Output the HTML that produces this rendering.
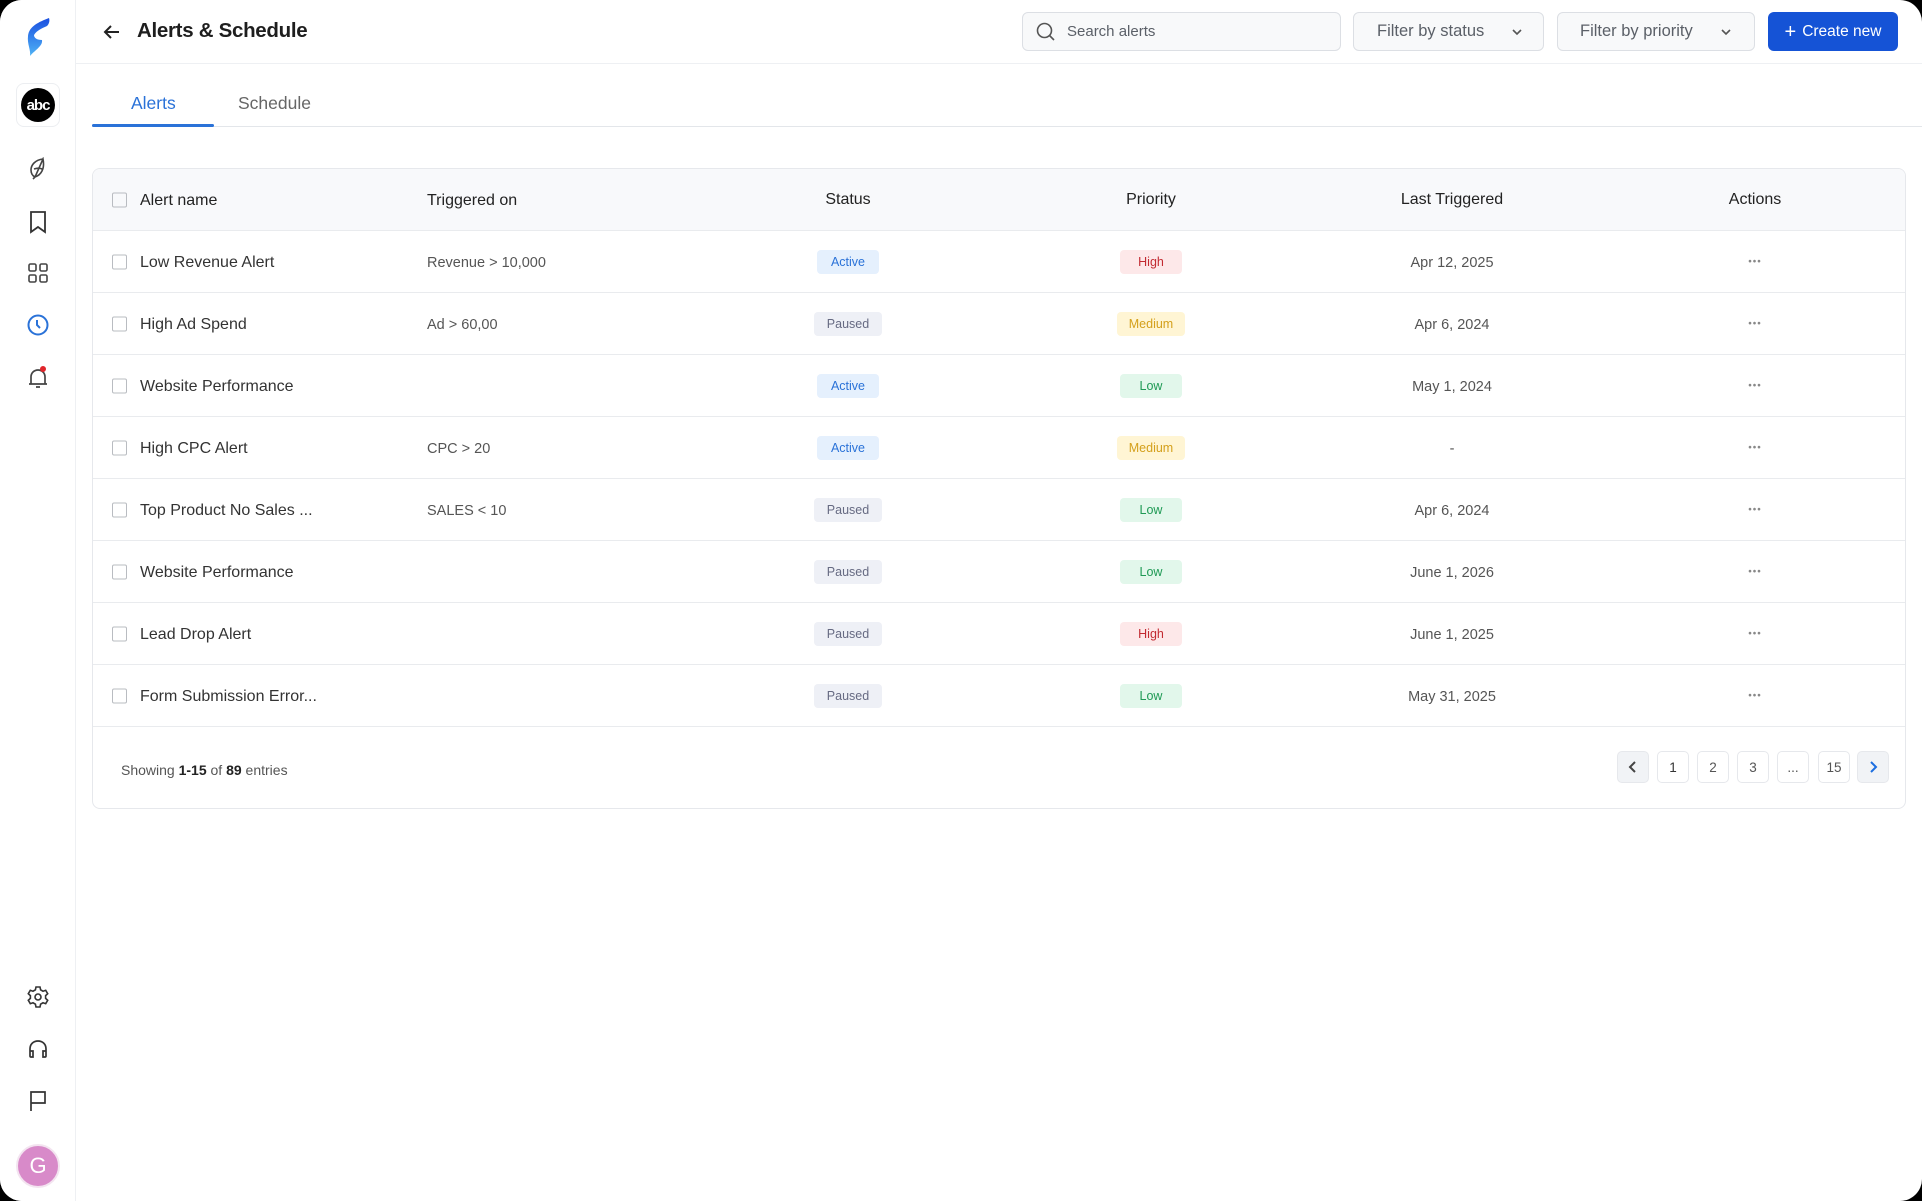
<!DOCTYPE html>
<html><head><meta charset="utf-8"><style>
*{box-sizing:border-box;margin:0;padding:0}
html,body{width:1922px;height:1201px;overflow:hidden;background:#000;font-family:"Liberation Sans",sans-serif;color:#2a2a2a}
#app{position:absolute;left:0;top:0;width:1922px;height:1201px;background:#fff;border-radius:22px;overflow:hidden}
.abs{position:absolute}
.side{left:0;top:0;width:76px;height:1201px;border-right:1px solid #eef0f3;background:#fff}
.ic{position:absolute;left:22px;width:32px;height:32px;display:flex;align-items:center;justify-content:center}
.hdr-line{left:76px;top:63px;width:1846px;height:1px;background:#eef0f3}
.box{position:absolute;border:1px solid #dcdfe4;background:#f8f9fa;border-radius:6px;height:39px;top:12px;display:flex;align-items:center;font-size:16.5px;color:#5b6068}
.tabs{left:92px;top:126px;width:1830px;height:1px;background:#e3e6ea}
.card{left:92px;top:168px;width:1814px;height:641px;border:1px solid #e6e8ec;border-radius:8px;overflow:hidden}
.row{position:absolute;left:0;width:100%;height:62px;border-bottom:1px solid #e9ebee}
.row>*{position:absolute;top:50%;transform:translateY(-50%)}
.cb{left:19px;width:15px;height:15px;border:1.5px solid #b9bcc1;border-radius:2px}
.nm{left:47px;font-size:16px;color:#333;margin-top:1px}
.tr{left:334px;font-size:14.5px;color:#555;margin-top:1px}
.c{transform:translate(-50%,-50%)!important;text-align:center}
.badge{font-size:12.5px;height:24px;line-height:24px;border-radius:4px;width:62px;text-align:center}
.act{background:#e5f0fd;color:#2a72d8}.pau{background:#eef0f6;color:#666a82}
.hi{background:#fde8e9;color:#c22a31}.me{background:#fff5d4;color:#d4a01c}.lo{background:#e2f7eb;color:#1f9a55}
.dt{font-size:14.5px;color:#555;margin-top:1px}
.dots{font-size:10px;color:#888;letter-spacing:1px}
.pg{position:absolute;top:751px;width:32px;height:32px;border:1px solid #e6e8ec;border-radius:5px;display:flex;align-items:center;justify-content:center;font-size:13.5px;color:#333;background:#fff}
</style></head><body><div id="app">
<div class="abs side">
 <svg class="abs" style="left:25px;top:18px" width="26" height="38" viewBox="0 0 26 38"><defs><linearGradient id="g" x1="0" y1="0" x2="0" y2="1"><stop offset="0" stop-color="#1a4fe0"/><stop offset="1" stop-color="#4fb3f5"/></linearGradient></defs><path d="M24 0 C14 4 4 8 3 18 C2 26 6 32 5 38 C10 32 18 28 17 22 C12 22 9 20 9 17 C12 12 18 10 22 8 C24 6 25 3 24 0Z" fill="url(#g)"/></svg>
 <div class="abs" style="left:16px;top:83px;width:44px;height:44px;border:1px solid #eceef1;border-radius:8px;display:flex;align-items:center;justify-content:center"><div style="width:34px;height:34px;border-radius:50%;background:#000;color:#fff;font-weight:bold;font-size:15px;display:flex;align-items:center;justify-content:center;letter-spacing:-1px">abc</div></div>
 <div class="ic" style="top:153px"><svg width="22" height="24" viewBox="0 0 22 24" fill="none" stroke="#444" stroke-width="1.6"><path d="M16 2 C8 3 4 8 4 13 C4 17 6 19 8 20 L6 22 M8 20 C14 18 18 12 16 2Z M7 12 C10 11 13 11 15 12"/></svg></div>
 <div class="ic" style="top:206px"><svg width="20" height="24" viewBox="0 0 20 24" fill="none" stroke="#333" stroke-width="1.8"><path d="M3 2 H17 V22 L10 17 L3 22Z"/></svg></div>
 <div class="ic" style="top:257px"><svg width="22" height="22" viewBox="0 0 22 22" fill="none" stroke="#444" stroke-width="1.6"><rect x="2" y="2" width="7" height="7" rx="1.5"/><rect x="13" y="2" width="7" height="7" rx="1.5"/><rect x="2" y="13" width="7" height="7" rx="1.5"/><rect x="13" y="13" width="7" height="7" rx="1.5"/></svg></div>
 <div class="ic" style="top:309px"><svg width="24" height="24" viewBox="0 0 24 24" fill="none" stroke="#2a72d8" stroke-width="2"><circle cx="12" cy="12" r="9.5"/><path d="M11 7 V12 L14 15"/></svg></div>
 <div class="ic" style="top:362px"><svg width="24" height="26" viewBox="0 0 24 26" fill="none" stroke="#444" stroke-width="1.7"><path d="M5 19 V12 C5 8 8 5 12 5 C16 5 19 8 19 12 V19 H3 H21 M10 22 H14"/><circle cx="17" cy="4" r="3" fill="#e0252b" stroke="none"/></svg></div>
 <div class="ic" style="top:981px"><svg width="24" height="24" viewBox="0 0 24 24" fill="none" stroke="#333" stroke-width="1.6"><circle cx="12" cy="12" r="3"/><path d="M10 2 H14 L14.6 4.8 L17 6.2 L19.7 5.3 L21.7 8.7 L19.6 10.6 V13.4 L21.7 15.3 L19.7 18.7 L17 17.8 L14.6 19.2 L14 22 H10 L9.4 19.2 L7 17.8 L4.3 18.7 L2.3 15.3 L4.4 13.4 V10.6 L2.3 8.7 L4.3 5.3 L7 6.2 L9.4 4.8Z"/></svg></div>
 <div class="ic" style="top:1033px"><svg width="24" height="24" viewBox="0 0 24 24" fill="none" stroke="#333" stroke-width="1.7"><path d="M4 18 V12 C4 7 7.5 4 12 4 C16.5 4 20 7 20 12 V18 M4 14 H7 V20 H5 C4.4 20 4 19.6 4 19Z M20 14 H17 V20 H19 C19.6 20 20 19.6 20 19Z"/></svg></div>
 <div class="ic" style="top:1085px"><svg width="24" height="24" viewBox="0 0 24 24" fill="none" stroke="#333" stroke-width="1.7"><path d="M5 22 V3 H19 V14 H5"/></svg></div>
 <div class="abs" style="left:16px;top:1144px;width:44px;height:44px;border-radius:50%;background:#d88ac9;border:2px solid #f3e4f0;color:#fff;font-size:22px;display:flex;align-items:center;justify-content:center">G</div>
</div>
<div class="abs hdr-line"></div>
<svg class="abs" style="left:102px;top:22px" width="20" height="20" viewBox="0 0 20 20" fill="none" stroke="#222" stroke-width="2"><path d="M17 10 H3 M9 4 L3 10 L9 16"/></svg>
<div class="abs" style="left:137px;top:19px;font-size:20.5px;font-weight:bold;color:#1e1e1e;letter-spacing:-0.3px">Alerts &amp; Schedule</div>
<div class="box" style="left:1022px;width:319px;padding-left:12px"><svg width="22" height="22" viewBox="0 0 22 22" fill="none" stroke="#555" stroke-width="1.6"><circle cx="9.5" cy="9.5" r="7"/><path d="M14.5 14.5 L19 19"/></svg><span style="margin-left:10px;font-size:15px">Search alerts</span></div>
<div class="box" style="left:1353px;width:191px;padding-left:23px">Filter by status<svg style="position:absolute;right:20px" width="12" height="8" viewBox="0 0 12 8" fill="none" stroke="#555" stroke-width="1.6"><path d="M2 2 L6 6 L10 2"/></svg></div>
<div class="box" style="left:1557px;width:198px;padding-left:22px">Filter by priority<svg style="position:absolute;right:22px" width="12" height="8" viewBox="0 0 12 8" fill="none" stroke="#555" stroke-width="1.6"><path d="M2 2 L6 6 L10 2"/></svg></div>
<div class="abs" style="left:1768px;top:12px;width:130px;height:39px;background:#1553d6;border-radius:6px;color:#fff;font-size:15.5px;display:flex;align-items:center;justify-content:center"><span style="font-size:20px;margin-right:6px;line-height:1">+</span>Create new</div>
<div class="abs tabs"></div>
<div class="abs" style="left:92px;top:124px;width:122px;height:3px;background:#2a72d8;border-radius:2px"></div>
<div class="abs" style="left:131px;top:93px;font-size:17.5px;color:#2a72d8">Alerts</div>
<div class="abs" style="left:238px;top:93px;font-size:17.5px;color:#666">Schedule</div>
<div class="abs card">
 <div class="row" style="top:0;background:#f8f9fb;font-size:16px;color:#222">
  <div class="cb"></div><div class="nm" style="color:#222">Alert name</div><div class="tr" style="font-size:16px;color:#222">Triggered on</div>
  <div class="c" style="left:755px">Status</div><div class="c" style="left:1058px">Priority</div><div class="c" style="left:1359px">Last Triggered</div><div class="c" style="left:1662px">Actions</div>
 </div>
 <div class="row" style="top:62px"><div class="cb"></div><div class="nm">Low Revenue Alert</div><div class="tr">Revenue &gt; 10,000</div><div class="c badge act" style="left:755px">Active</div><div class="c badge hi" style="left:1058px">High</div><div class="c dt" style="left:1359px">Apr 12, 2025</div><div class="c dots" style="left:1662px">•••</div></div>
 <div class="row" style="top:124px"><div class="cb"></div><div class="nm">High Ad Spend</div><div class="tr">Ad &gt; 60,00</div><div class="c badge pau" style="left:755px;width:68px">Paused</div><div class="c badge me" style="left:1058px;width:68px">Medium</div><div class="c dt" style="left:1359px">Apr 6, 2024</div><div class="c dots" style="left:1662px">•••</div></div>
 <div class="row" style="top:186px"><div class="cb"></div><div class="nm">Website Performance</div><div class="c badge act" style="left:755px">Active</div><div class="c badge lo" style="left:1058px">Low</div><div class="c dt" style="left:1359px">May 1, 2024</div><div class="c dots" style="left:1662px">•••</div></div>
 <div class="row" style="top:248px"><div class="cb"></div><div class="nm">High CPC Alert</div><div class="tr">CPC &gt; 20</div><div class="c badge act" style="left:755px">Active</div><div class="c badge me" style="left:1058px;width:68px">Medium</div><div class="c dt" style="left:1359px">-</div><div class="c dots" style="left:1662px">•••</div></div>
 <div class="row" style="top:310px"><div class="cb"></div><div class="nm">Top Product No Sales ...</div><div class="tr">SALES &lt; 10</div><div class="c badge pau" style="left:755px;width:68px">Paused</div><div class="c badge lo" style="left:1058px">Low</div><div class="c dt" style="left:1359px">Apr 6, 2024</div><div class="c dots" style="left:1662px">•••</div></div>
 <div class="row" style="top:372px"><div class="cb"></div><div class="nm">Website Performance</div><div class="c badge pau" style="left:755px;width:68px">Paused</div><div class="c badge lo" style="left:1058px">Low</div><div class="c dt" style="left:1359px">June 1, 2026</div><div class="c dots" style="left:1662px">•••</div></div>
 <div class="row" style="top:434px"><div class="cb"></div><div class="nm">Lead Drop Alert</div><div class="c badge pau" style="left:755px;width:68px">Paused</div><div class="c badge hi" style="left:1058px">High</div><div class="c dt" style="left:1359px">June 1, 2025</div><div class="c dots" style="left:1662px">•••</div></div>
 <div class="row" style="top:496px"><div class="cb"></div><div class="nm">Form Submission Error...</div><div class="c badge pau" style="left:755px;width:68px">Paused</div><div class="c badge lo" style="left:1058px">Low</div><div class="c dt" style="left:1359px">May 31, 2025</div><div class="c dots" style="left:1662px">•••</div></div>
 <div class="abs" style="left:28px;top:593px;font-size:14px;color:#555">Showing <b style="color:#222">1-15</b> of <b style="color:#222">89</b> entries</div>
</div>
<div class="pg" style="left:1617px;background:#f1f3f6"><svg width="10" height="14" viewBox="0 0 10 14" fill="none" stroke="#444" stroke-width="2"><path d="M7 2 L2 7 L7 12"/></svg></div>
<div class="pg" style="left:1657px">1</div>
<div class="pg" style="left:1697px;color:#555">2</div>
<div class="pg" style="left:1737px;color:#555">3</div>
<div class="pg" style="left:1777px;color:#555">...</div>
<div class="pg" style="left:1818px;color:#555">15</div>
<div class="pg" style="left:1857px;background:#f1f3f6"><svg width="10" height="14" viewBox="0 0 10 14" fill="none" stroke="#1c6ee0" stroke-width="2"><path d="M3 2 L8 7 L3 12"/></svg></div>
</div></body></html>
